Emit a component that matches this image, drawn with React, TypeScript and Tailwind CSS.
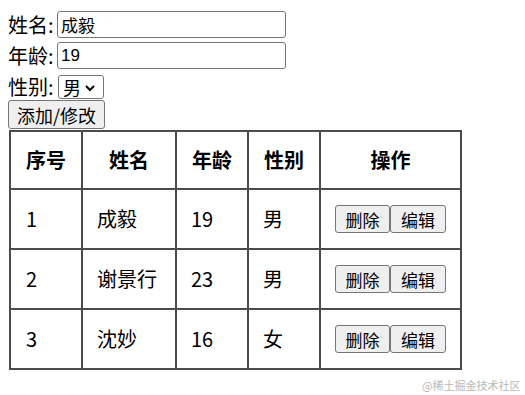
import React from 'react';

const rows = [
  { id: 1, name: '成毅', age: 19, sex: '男' },
  { id: 2, name: '谢景行', age: 23, sex: '男' },
  { id: 3, name: '沈妙', age: 16, sex: '女' },
];

const font = { fontFamily: '"Noto Sans CJK SC", "Liberation Sans", sans-serif' };

const App = () => {
  return (
    <div className="relative w-[525px] h-[395px] bg-white text-black" style={font}>
      <div className="px-2 pt-[11px]">
        {/* form */}
        <div className="flex items-center h-[27px] text-[20px] leading-none">
          <span className="w-[49px]">姓名:</span>
          <input
            defaultValue="成毅"
            className="w-[229px] h-[27px] border border-[#767676] rounded-[3px] px-[3px] text-[17px] outline-none"
          />
        </div>
        <div className="flex items-center h-[27px] mt-[4px] text-[20px] leading-none">
          <span className="w-[49px]">年龄:</span>
          <input
            defaultValue="19"
            className="w-[229px] h-[27px] border border-[#767676] rounded-[3px] px-[3px] text-[17px] outline-none"
            style={{ fontFamily: '"Liberation Sans", sans-serif' }}
          />
        </div>
        <div className="flex items-center h-[24px] mt-[6px] text-[20px] leading-none">
          <span className="w-[50px]">性别:</span>
          <div className="flex items-center w-[46px] h-[24px] border border-[#767676] rounded-[3px] pl-[4px] gap-[3px] text-[18px]">
            <span>男</span>
            <svg width="12" height="8" viewBox="0 0 12 8" className="mt-[1px]">
              <path d="M2 2 L6 6 L10 2" fill="none" stroke="black" strokeWidth="2" />
            </svg>
          </div>
        </div>
        <button className="block mt-[1px] w-[97px] h-[29px] bg-[#efefef] border border-[#767676] rounded-[3px] text-[18px] leading-none">
          添加/修改
        </button>

        {/* table */}
        <table className="ml-[1px] mt-[1px] border-collapse border-2 border-[#4b4b4b] text-[20px]">
          <thead>
            <tr className="h-[58px]">
              <th className="w-[72px] border-2 border-[#4b4b4b] font-bold">序号</th>
              <th className="w-[94px] border-2 border-[#4b4b4b] font-bold">姓名</th>
              <th className="w-[72px] border-2 border-[#4b4b4b] font-bold">年龄</th>
              <th className="w-[72px] border-2 border-[#4b4b4b] font-bold">性别</th>
              <th className="w-[141px] border-2 border-[#4b4b4b] font-bold">操作</th>
            </tr>
          </thead>
          <tbody>
            {rows.map((r) => (
              <tr key={r.id} className="h-[60px]">
                <td className="border-2 border-[#4b4b4b] pl-[15px]">{r.id}</td>
                <td className="border-2 border-[#4b4b4b] pl-[14px]">{r.name}</td>
                <td className="border-2 border-[#4b4b4b] pl-[14px]">{r.age}</td>
                <td className="border-2 border-[#4b4b4b] pl-[14px]">{r.sex}</td>
                <td className="border-2 border-[#4b4b4b] pl-[14px]">
                  <div className="flex">
                    <button className="w-[55px] h-[28px] bg-[#efefef] border border-[#767676] rounded-[3px] text-[17px] leading-none">
                      删除
                    </button>
                    <button className="w-[56px] h-[28px] bg-[#efefef] border border-[#767676] rounded-[3px] text-[17px] leading-none">
                      编辑
                    </button>
                  </div>
                </td>
              </tr>
            ))}
          </tbody>
        </table>
      </div>

      {/* watermark */}
      <span className="absolute left-[422px] top-[377px] text-[11px] text-[#b8b8b8]">@稀土掘金技术社区</span>
    </div>
  );
};

export default App;
